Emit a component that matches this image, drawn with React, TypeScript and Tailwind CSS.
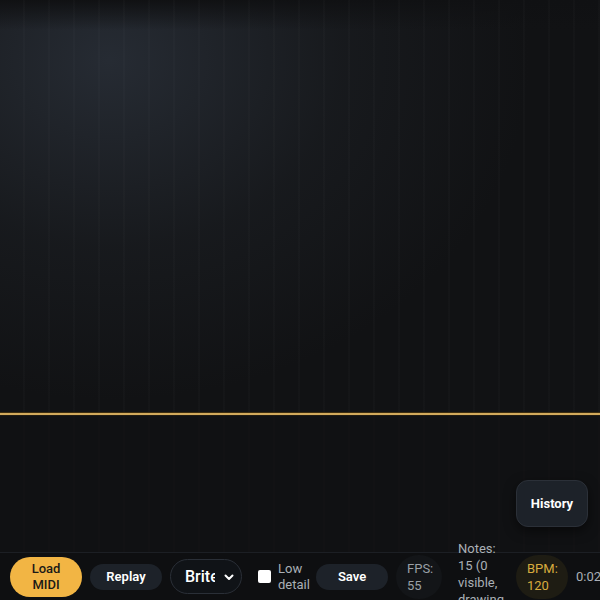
import React from "react";

export default function App() {
  return (
    <div
      className="relative flex h-[600px] w-[600px] flex-col overflow-hidden bg-[#111214] text-white"
      style={{ fontFamily: "Roboto, 'Liberation Sans', sans-serif" }}
    >
      {/* canvas area */}
      <div className="relative flex-1 overflow-hidden bg-[#111214]">
        <div className="absolute inset-0 bg-[radial-gradient(ellipse_420px_340px_at_110px_60px,rgba(52,60,72,0.6),rgba(38,43,50,0.3)_55%,transparent_100%)]" />
        <div className="absolute inset-0 bg-[linear-gradient(180deg,#101113_0px,rgba(16,17,19,0.6)_12px,rgba(16,17,19,0)_30px)]" />
        <div className="absolute inset-0 bg-[repeating-linear-gradient(90deg,rgba(255,255,255,0)_0px,rgba(255,255,255,0)_23px,rgba(255,255,255,0.015)_23px,rgba(255,255,255,0.015)_25px)]" />
        <div className="absolute left-0 right-0 top-[412px] h-[4px] bg-[#3a2c10]" />
        <div className="absolute left-0 right-0 top-[413px] h-[2px] bg-[#d2aa5c]" />
        <div className="absolute inset-x-0 top-[415px] bottom-0 bg-[#101113]/60" />
        <button className="absolute right-[12px] top-[480px] flex h-[47px] w-[72px] items-center justify-center rounded-xl border border-[#2b3038] bg-[#1d2229] text-[13px] font-bold text-white shadow-[0_4px_12px_rgba(0,0,0,0.5)]">
          History
        </button>
      </div>

      {/* toolbar */}
      <div className="relative z-10 flex h-[48px] shrink-0 items-center gap-2 border-t border-[#1c1f24] bg-[#0e0f11] pl-[10px]">
        <button className="flex h-[40px] w-[72px] shrink-0 flex-col items-center justify-center rounded-full bg-[#f2b544] text-[13px] font-medium leading-[16px] text-[#1b1a17]">
          <span>Load</span>
          <span>MIDI</span>
        </button>
        <button className="flex h-[26px] w-[72px] shrink-0 items-center justify-center rounded-full bg-[#1d2229] text-[13px] font-semibold text-white">
          Replay
        </button>
        <div className="flex h-[35px] w-[72px] shrink-0 items-center overflow-hidden rounded-full border border-[#2a2f37] bg-[#101317] pl-[14px] pr-[6px]">
          <span className="w-[30px] overflow-hidden whitespace-nowrap text-[16px] font-medium text-white">
            Brite Piano
          </span>
          <svg
            className="ml-auto"
            width="12"
            height="12"
            viewBox="0 0 24 24"
            fill="none"
            stroke="white"
            strokeWidth="4"
            strokeLinecap="round"
            strokeLinejoin="round"
          >
            <path d="M5 9l7 7 7-7" />
          </svg>
        </div>
        <label className="flex w-[58px] shrink-0 items-center gap-[7px] pl-2">
          <span className="h-[13px] w-[13px] shrink-0 rounded-[2px] bg-white" />
          <span className="flex flex-col text-[13px] leading-[16px] text-[#aab0b6]">
            <span>Low</span>
            <span>detail</span>
          </span>
        </label>
        <button className="flex h-[26px] w-[72px] shrink-0 items-center justify-center rounded-full bg-[#1d2229] text-[13px] font-semibold text-white">
          Save
        </button>
        <div className="flex h-[44px] w-[46px] shrink-0 flex-col justify-center rounded-full bg-[#131518] pl-[11px] text-[13px] leading-[17px] text-[#9aa0a6]">
          <span>FPS:</span>
          <span>55</span>
        </div>
        <div className="flex w-[58px] shrink-0 flex-col pl-[8px] pt-[12px] text-[13px] leading-[17px] text-[#aab0b6]">
          <span>Notes:</span>
          <span>15 (0</span>
          <span>visible,</span>
          <span>drawing</span>
          <span>0)</span>
        </div>
        <div className="flex h-[44px] w-[52px] shrink-0 flex-col justify-center rounded-full bg-[#1e1c13] pl-[11px] text-[13px] leading-[17px] text-[#d8ab3e]">
          <span>BPM:</span>
          <span>120</span>
        </div>
        <span className="shrink-0 text-[13px] text-[#aab0b6]">0:02</span>
      </div>
    </div>
  );
}
